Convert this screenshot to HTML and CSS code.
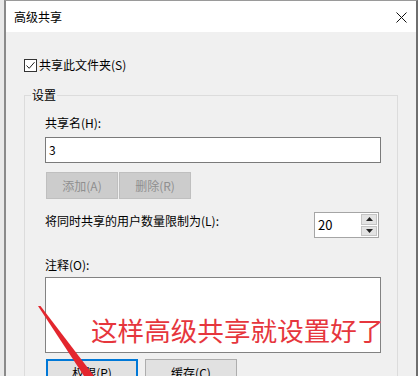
FILE: index.html
```html
<!DOCTYPE html>
<html lang="zh-CN">

<head>
    <meta charset="UTF-8">
    <meta name="viewport" content="width=device-width, initial-scale=1.0">
    <title>高级共享</title>
    <link rel="stylesheet" href="styles.css">
</head>

<body>
    <div class="window">
        <div class="titlebar">
            <span class="title">高级共享</span>
            <svg class="close" width="11" height="11" viewBox="0 0 11 11">
                <path d="M0.5 0.5 L10.5 10.5 M10.5 0.5 L0.5 10.5" stroke="#111" stroke-width="1" fill="none"/>
            </svg>
        </div>
        <div class="content">
            <div class="check-row">
                <span class="checkbox">
                    <svg width="11" height="11" viewBox="0 0 11 11">
                        <path d="M1.5 5.5 L4.2 8.3 L9.5 2.2" stroke="#222" stroke-width="1" fill="none"/>
                    </svg>
                </span>
                <span>共享此文件夹(S)</span>
            </div>

            <fieldset class="group">
                <legend>设置</legend>
                <div class="label">共享名(H):</div>
                <div class="textbox">3</div>
                <div class="btn-row">
                    <button class="btn disabled">添加(A)</button>
                    <button class="btn disabled">删除(R)</button>
                </div>
                <div class="limit-row">
                    <span class="label">将同时共享的用户数量限制为(L):</span>
                    <div class="spin">
                        <span class="spin-value">20</span>
                        <div class="spin-btns">
                            <span class="spin-btn">
                                <svg width="7" height="4" viewBox="0 0 7 4"><path d="M0 4 L3.5 0 L7 4 Z" fill="#222"/></svg>
                            </span>
                            <span class="spin-btn">
                                <svg width="7" height="4" viewBox="0 0 7 4"><path d="M0 0 L7 0 L3.5 4 Z" fill="#222"/></svg>
                            </span>
                        </div>
                    </div>
                </div>
                <div class="label note-label">注释(O):</div>
                <div class="textarea"></div>
                <div class="btn-row bottom-row">
                    <button class="btn wide focused">权限(P)</button>
                    <button class="btn wide">缓存(C)</button>
                </div>
            </fieldset>
        </div>
    </div>

    <div class="callout">这样高级共享就设置好了</div>
    <svg class="arrow" width="418" height="376" viewBox="0 0 418 376">
        <polygon points="38,306 40.5,306 94,376 84,376" fill="#e3262e"/>
    </svg>
</body>

</html>
```

FILE: styles.css
```css
html,
body {
    height: 376px;
    overflow: hidden;
}

body {
    font-family: "Noto Sans CJK SC", "Noto Sans", sans-serif;
    font-size: 12px;
    color: #000;
    background-color: #e9e9e9;
    margin: 0;
    padding: 0;
    position: relative;
}

.window {
    margin-left: 4px;
    width: 410px;
    height: 375px;
    overflow: hidden;
    border-top: 1px solid #9a9a9a;
    border-left: 2px solid #8a8a8a;
    border-right: 2px solid #6f6f6f;
    background-color: #f0f0f0;
}

.titlebar {
    height: 31px;
    background-color: #fff;
    display: flex;
    align-items: center;
    justify-content: space-between;
    padding: 0 9px 0 8px;
}

.title {
    line-height: 16px;
    margin-top: 1px;
}

.close {
    display: block;
    margin-top: 1px;
}

.content {
    padding: 25px 18px 0 18px;
}

.check-row {
    display: flex;
    align-items: center;
    height: 16px;
    line-height: 16px;
}

.checkbox {
    width: 11px;
    height: 11px;
    border: 1px solid #333;
    background-color: #fff;
    margin: 1px 2px 0 0;
    display: flex;
}

.group {
    margin: 14px 0 0 0;
    padding: 12px 16px 0 20px;
    border: 1px solid #dcdcdc;
    min-width: 0;
    height: 330px;
    box-sizing: border-box;
}

.group legend {
    padding: 0 1px;
    margin-left: -14px;
    line-height: 16px;
}

.label {
    line-height: 16px;
}

.textbox {
    margin-top: 6px;
    height: 24px;
    border: 1px solid #7a7a7a;
    background-color: #fff;
    line-height: 24px;
    padding-left: 3px;
    font-size: 12px;
}

.btn-row {
    display: flex;
    gap: 1px;
    margin-top: 9px;
    margin-left: 1px;
}

.btn {
    font-family: inherit;
    font-size: 12px;
    width: 72px;
    height: 27px;
    padding: 0;
    border: 1px solid #adadad;
    background-color: #e1e1e1;
    color: #000;
}

.btn.disabled {
    background-color: #cccccc;
    border-color: #bfbfbf;
    color: #8f8f8f;
}

.limit-row {
    display: flex;
    justify-content: space-between;
    align-items: flex-start;
    margin-top: 13px;
    margin-right: 2px;
}

.limit-row .label {
    margin-top: 1px;
}

.spin {
    width: 63px;
    height: 24px;
    border: 1px solid #a5a5a5;
    background-color: #fff;
    display: flex;
    justify-content: space-between;
}

.spin-value {
    line-height: 24px;
    padding-left: 3px;
    font-size: 13px;
}

.spin-btns {
    width: 16px;
    display: flex;
    flex-direction: column;
    gap: 1px;
    padding: 1px 1px 1px 0;
}

.spin-btn {
    flex: 1;
    background-color: #e3e3e3;
    border: 1px solid #c4c4c4;
    display: flex;
    align-items: center;
    justify-content: center;
}

.spin-btn svg {
    display: block;
}

.note-label {
    margin-top: 19px;
}

.textarea {
    margin-top: 4px;
    height: 74px;
    border: 1px solid #828282;
    background-color: #fff;
}

.bottom-row {
    gap: 7px;
    margin-top: 6px;
}

.btn.wide {
    width: 92px;
}

.btn.focused {
    border: 2px solid #0078d7;
}

.callout {
    position: absolute;
    left: 91px;
    top: 314px;
    font-size: 26.6px;
    line-height: 32px;
    color: #e6363d;
    white-space: nowrap;
}

.arrow {
    position: absolute;
    left: 0;
    top: 0;
}
```
